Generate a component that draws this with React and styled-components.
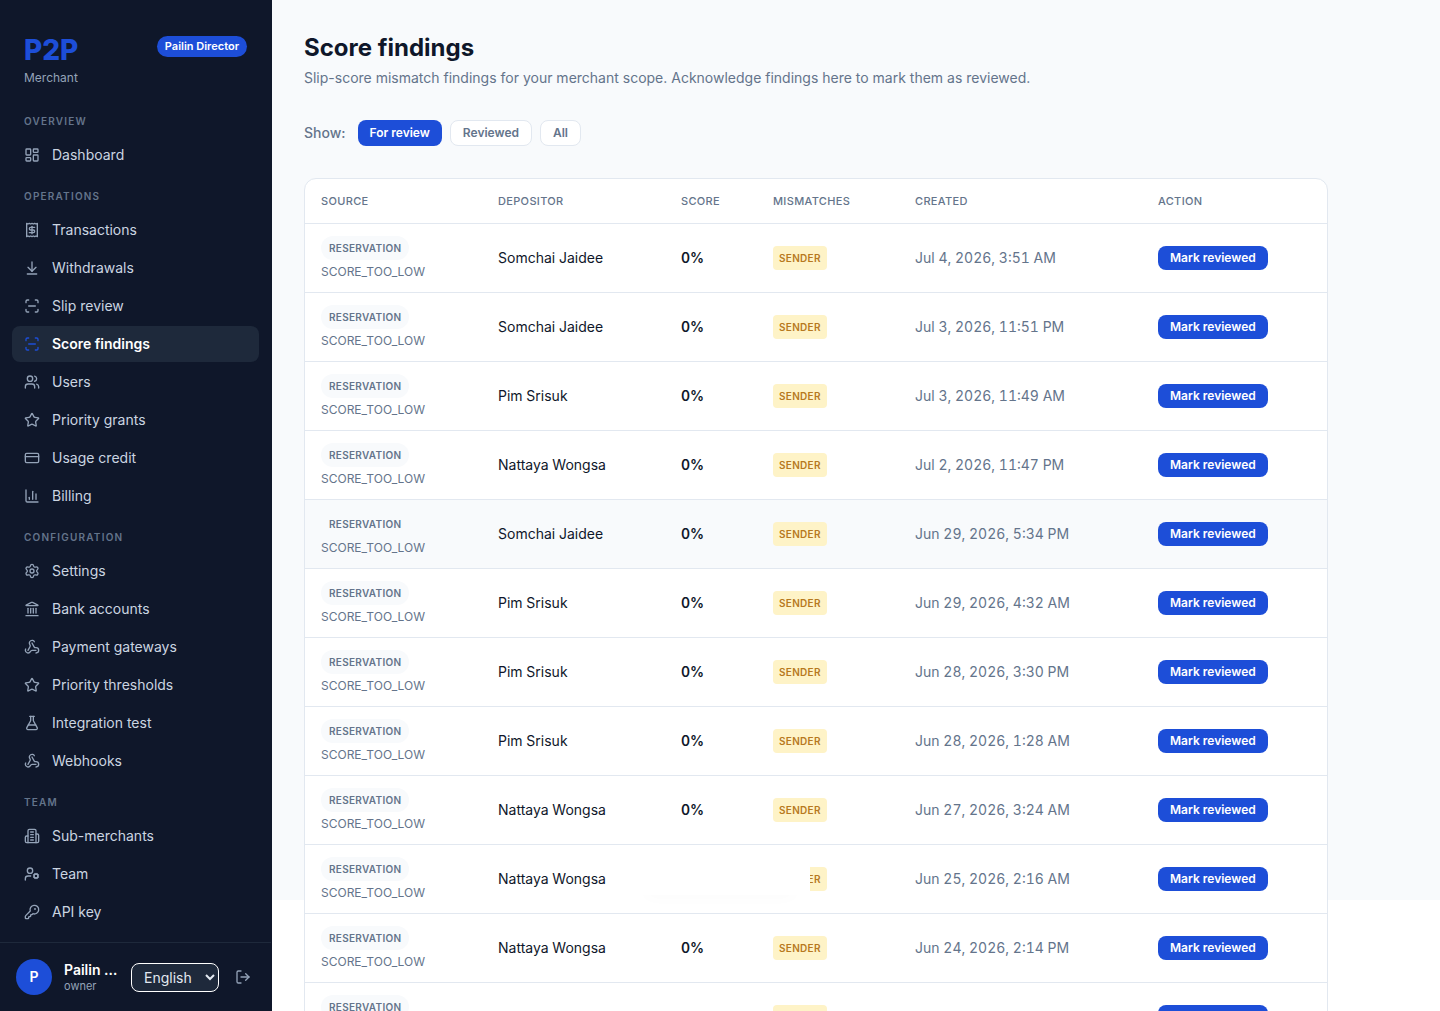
import React, { useState } from 'react'
import styled, { createGlobalStyle } from 'styled-components'
import {
    ArrowDownToLine,
    ChartColumn,
    CreditCard,
    FlaskConical,
    KeyRound,
    Landmark,
    LayoutDashboard,
    LogOut,
    Receipt,
    ScanLine,
    Settings,
    Star,
    UserCog,
    Users,
    Webhook,
} from 'lucide-react'

const GlobalStyle = createGlobalStyle`
    *{
        box-sizing:border-box;
    }
    body{
        margin:0;
        font-family:Inter, "Noto Sans", sans-serif;
        font-size:14px;
        line-height:20px;
        color:#0f172a;
        background-color:white;
    }
    button, select{
        font-family:inherit;
    }
`
const Container = styled.div`
    display:flex;
    height:100vh;
    overflow:hidden;
`
const Sidebar = styled.aside`
    flex:none;
    width:272px;
    display:flex;
    flex-direction:column;
    background-color:#0f172a;
    border-right:1px solid #0f172a;
`
const Brand = styled.div`
    display:flex;
    align-items:flex-start;
    justify-content:space-between;
    padding:36px 24px 10px;
`
const Logo = styled.div`
    font-size:28px;
    line-height:28px;
    font-weight:800;
    color:#1d4ed8;
`
const LogoSub = styled.div`
    margin-top:4px;
    font-size:12px;
    line-height:20px;
    color:#94a3b8;
`
const MerchantTag = styled.span`
    padding:2px 8px;
    border-radius:11px;
    font-size:11px;
    line-height:17px;
    font-weight:600;
    color:white;
    background-color:#1d4ed8;
`
const Nav = styled.nav`
    flex:1;
    min-height:0;
    padding:0 12px;
    overflow-y:auto;
    scrollbar-width:none;
`
const NavTitle = styled.h2`
    margin:0;
    padding:16px 12px 8px;
    font-size:10px;
    line-height:15px;
    font-weight:600;
    letter-spacing:0.12em;
    text-transform:uppercase;
    color:#64748b;
`
const NavList = styled.ul`
    display:flex;
    flex-direction:column;
    gap:2px;
    margin:0;
    padding:0;
    list-style:none;
`
const NavLink = styled.a`
    display:flex;
    align-items:center;
    gap:12px;
    height:36px;
    padding:0 12px;
    border-radius:8px;
    text-decoration:none;
    font-weight:${(props)=>props.$active ? "600" : "400"};
    color:${(props)=>props.$active ? "white" : "#cbd5e1"};
    background-color:${(props)=>props.$active ? "#1e293b" : "transparent"};
    svg{
        color:${(props)=>props.$active ? "#1d4ed8" : "#94a3b8"};
    }
`
const Account = styled.div`
    display:flex;
    align-items:center;
    gap:12px;
    padding:16px;
    border-top:1px solid #1e293b;
`
const Avatar = styled.div`
    flex:none;
    display:flex;
    align-items:center;
    justify-content:center;
    width:36px;
    height:36px;
    border-radius:50%;
    font-weight:600;
    color:white;
    background-color:#1d4ed8;
`
const AccountInfo = styled.div`
    flex:1;
    min-width:0;
`
const AccountName = styled.div`
    line-height:18px;
    font-weight:600;
    color:white;
    overflow:hidden;
    white-space:nowrap;
    text-overflow:ellipsis;
`
const AccountRole = styled.div`
    font-size:11px;
    line-height:14px;
    color:#94a3b8;
`
const Language = styled.select`
    flex:none;
    width:88px;
    height:29px;
    padding:0 8px;
    border:1px solid white;
    border-radius:8px;
    font-size:14px;
    color:#e2e8f0;
    background-color:#1e293b;
`
const LogoutButton = styled.button`
    display:flex;
    padding:4px;
    border:none;
    color:#94a3b8;
    background-color:transparent;
    cursor:pointer;
`
const Main = styled.main`
    flex:1;
    min-width:0;
    overflow-y:auto;
    scrollbar-width:none;
`
const Content = styled.div`
    padding:32px;
    background:linear-gradient(#f8fafc, #f8fafc) no-repeat;
    background-size:100% 900px;
`
const Title = styled.h1`
    margin:0;
    font-size:24px;
    line-height:32px;
    font-weight:700;
`
const Subtitle = styled.p`
    margin:4px 0 0;
    color:#64748b;
`
const Filters = styled.div`
    display:flex;
    align-items:center;
    gap:8px;
    margin:32px 0;
`
const FilterLabel = styled.span`
    margin-right:4px;
    font-weight:500;
    color:#64748b;
`
const FilterButton = styled.button`
    height:26px;
    padding:0 12px;
    border:${(props)=>props.$active ? "none" : "1px solid #e2e8f0"};
    border-radius:8px;
    font-size:12px;
    line-height:16px;
    font-weight:600;
    color:${(props)=>props.$active ? "white" : "#64748b"};
    background-color:${(props)=>props.$active ? "#1d4ed8" : "white"};
    cursor:pointer;
`
const Card = styled.div`
    max-width:1024px;
    border:1px solid #e2e8f0;
    border-radius:12px;
    overflow:hidden;
    background-color:white;
`
const Table = styled.table`
    width:100%;
    table-layout:fixed;
    border-collapse:separate;
    border-spacing:0;
`
const Th = styled.th`
    width:${(props)=>props.$width};
    height:45px;
    padding:0 16px;
    border-bottom:1px solid #e2e8f0;
    font-size:11px;
    line-height:16px;
    font-weight:500;
    letter-spacing:0.03em;
    text-align:left;
    text-transform:uppercase;
    color:#64748b;
`
const Row = styled.tr`
    background-color:${(props)=>props.$highlighted ? "#f8fafc" : "white"};
`
const Td = styled.td`
    height:69px;
    padding:12px 16px;
    border-bottom:1px solid #e2e8f0;
    white-space:nowrap;
    font-weight:${(props)=>props.$strong ? "600" : "400"};
    font-variant-numeric:tabular-nums;
    color:${(props)=>props.$muted ? "#64748b" : "#0f172a"};
`
const Source = styled.div`
    display:flex;
    flex-direction:column;
    align-items:flex-start;
    gap:4px;
`
const SourceTag = styled.span`
    padding:4px 8px;
    border-radius:12px;
    font-size:10px;
    line-height:16px;
    font-weight:600;
    letter-spacing:0.03em;
    color:#64748b;
    background-color:#f8fafc;
`
const SourceReason = styled.span`
    font-size:12px;
    line-height:16px;
    color:#64748b;
`
const MismatchTag = styled.span`
    display:inline-block;
    padding:4px 6px;
    border-radius:4px;
    font-size:10px;
    line-height:16px;
    font-weight:600;
    letter-spacing:0.03em;
    vertical-align:middle;
    color:#b7791f;
    background-color:#fef3c7;
`
const ReviewButton = styled.button`
    height:24px;
    padding:0 12px;
    border:none;
    border-radius:8px;
    font-size:12px;
    line-height:16px;
    font-weight:600;
    vertical-align:middle;
    color:white;
    background-color:#1d4ed8;
    cursor:pointer;
`
const Toast = styled.div`
    position:fixed;
    bottom:116px;
    left:50%;
    width:180px;
    height:40px;
    margin-left:-90px;
    background-color:white;
    box-shadow:0 16px 16px -16px rgba(15, 23, 42, 0.03);
`

const OfficeBuilding = ({ size, strokeWidth = 2 }) => (
    <svg width={size} height={size} viewBox="0 0 24 24" fill="none" stroke="currentColor" strokeWidth={strokeWidth} strokeLinecap="round" strokeLinejoin="round">
        <path d="M6 22V4a2 2 0 0 1 2-2h8a2 2 0 0 1 2 2v18Z" />
        <path d="M6 12H4a2 2 0 0 0-2 2v6a2 2 0 0 0 2 2h2" />
        <path d="M18 9h2a2 2 0 0 1 2 2v9a2 2 0 0 1-2 2h-2" />
        <path d="M10 6h4M10 10h4M10 14h4M10 18h4" />
    </svg>
)

const sections = [
    {
        title: "Overview",
        items: [{ label: "Dashboard", icon: LayoutDashboard }],
    },
    {
        title: "Operations",
        items: [
            { label: "Transactions", icon: Receipt },
            { label: "Withdrawals", icon: ArrowDownToLine },
            { label: "Slip review", icon: ScanLine },
            { label: "Score findings", icon: ScanLine, active: true },
            { label: "Users", icon: Users },
            { label: "Priority grants", icon: Star },
            { label: "Usage credit", icon: CreditCard },
            { label: "Billing", icon: ChartColumn },
        ],
    },
    {
        title: "Configuration",
        items: [
            { label: "Settings", icon: Settings },
            { label: "Bank accounts", icon: Landmark },
            { label: "Payment gateways", icon: Webhook },
            { label: "Priority thresholds", icon: Star },
            { label: "Integration test", icon: FlaskConical },
            { label: "Webhooks", icon: Webhook },
        ],
    },
    {
        title: "Team",
        items: [
            { label: "Sub-merchants", icon: OfficeBuilding },
            { label: "Team", icon: UserCog },
            { label: "API key", icon: KeyRound },
        ],
    },
]

const columns = [
    { label: "Source", width: "177px" },
    { label: "Depositor", width: "183px" },
    { label: "Score", width: "92px" },
    { label: "Mismatches", width: "142px" },
    { label: "Created", width: "243px" },
    { label: "Action", width: "auto" },
]

const findings = [
    { depositor: "Somchai Jaidee", score: "0%", created: "Jul 4, 2026, 3:51 AM" },
    { depositor: "Somchai Jaidee", score: "0%", created: "Jul 3, 2026, 11:51 PM" },
    { depositor: "Pim Srisuk", score: "0%", created: "Jul 3, 2026, 11:49 AM" },
    { depositor: "Nattaya Wongsa", score: "0%", created: "Jul 2, 2026, 11:47 PM" },
    { depositor: "Somchai Jaidee", score: "0%", created: "Jun 29, 2026, 5:34 PM", highlighted: true },
    { depositor: "Pim Srisuk", score: "0%", created: "Jun 29, 2026, 4:32 AM" },
    { depositor: "Pim Srisuk", score: "0%", created: "Jun 28, 2026, 3:30 PM" },
    { depositor: "Pim Srisuk", score: "0%", created: "Jun 28, 2026, 1:28 AM" },
    { depositor: "Nattaya Wongsa", score: "0%", created: "Jun 27, 2026, 3:24 AM" },
    { depositor: "Nattaya Wongsa", score: "", created: "Jun 25, 2026, 2:16 AM" },
    { depositor: "Nattaya Wongsa", score: "0%", created: "Jun 24, 2026, 2:14 PM" },
    { depositor: "Nattaya Wongsa", score: "0%", created: "Jun 24, 2026, 2:12 AM" },
]

const filters = ["For review", "Reviewed", "All"]

const App = () => {
    const [filter, setFilter] = useState("For review")

    return (
        <Container>
            <GlobalStyle />
            <Sidebar>
                <Brand>
                    <div>
                        <Logo>P2P</Logo>
                        <LogoSub>Merchant</LogoSub>
                    </div>
                    <MerchantTag>Pailin Director</MerchantTag>
                </Brand>
                <Nav>
                    {sections.map((section) => (
                        <section key={section.title}>
                            <NavTitle>{section.title}</NavTitle>
                            <NavList>
                                {section.items.map(({ label, icon: Icon, active }) => (
                                    <li key={label}>
                                        <NavLink href="#" $active={active}>
                                            <Icon size={16} />
                                            {label}
                                        </NavLink>
                                    </li>
                                ))}
                            </NavList>
                        </section>
                    ))}
                </Nav>
                <Account>
                    <Avatar>P</Avatar>
                    <AccountInfo>
                        <AccountName>Pailin Director</AccountName>
                        <AccountRole>owner</AccountRole>
                    </AccountInfo>
                    <Language aria-label="Language">
                        <option>English</option>
                    </Language>
                    <LogoutButton aria-label="Log out">
                        <LogOut size={16} />
                    </LogoutButton>
                </Account>
            </Sidebar>
            <Main>
                <Content>
                    <Title>Score findings</Title>
                    <Subtitle>Slip-score mismatch findings for your merchant scope. Acknowledge findings here to mark them as reviewed.</Subtitle>
                    <Filters>
                        <FilterLabel>Show:</FilterLabel>
                        {filters.map((name) => (
                            <FilterButton key={name} $active={name === filter} onClick={() => setFilter(name)}>{name}</FilterButton>
                        ))}
                    </Filters>
                    <Card>
                        <Table>
                            <thead>
                                <tr>
                                    {columns.map((column) => (
                                        <Th key={column.label} $width={column.width}>{column.label}</Th>
                                    ))}
                                </tr>
                            </thead>
                            <tbody>
                                {findings.map((finding) => (
                                    <Row key={finding.created} $highlighted={finding.highlighted}>
                                        <Td>
                                            <Source>
                                                <SourceTag>RESERVATION</SourceTag>
                                                <SourceReason>SCORE_TOO_LOW</SourceReason>
                                            </Source>
                                        </Td>
                                        <Td>{finding.depositor}</Td>
                                        <Td $strong>{finding.score}</Td>
                                        <Td><MismatchTag>SENDER</MismatchTag></Td>
                                        <Td $muted>{finding.created}</Td>
                                        <Td><ReviewButton>Mark reviewed</ReviewButton></Td>
                                    </Row>
                                ))}
                            </tbody>
                        </Table>
                    </Card>
                </Content>
            </Main>
            <Toast role="status" />
        </Container>
    )
}
export default App
